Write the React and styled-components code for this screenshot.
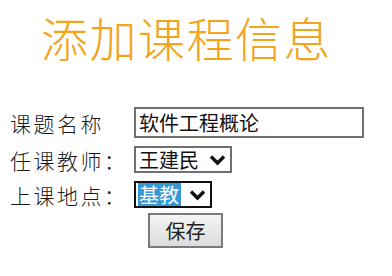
import styled, { createGlobalStyle } from "styled-components";

const Global = createGlobalStyle`
  html, body {
    margin: 0;
    padding: 0;
    background: #fff;
  }
`;

const Page = styled.div`
  width: 392px;
  height: 276px;
  padding: 0 0 0 10px;
  box-sizing: border-box;
  font-family: "Noto Sans CJK SC", sans-serif;
  color: #111;
`;

const Title = styled.h1`
  margin: 0;
  padding: 9px 0 0 31px;
  height: 95px;
  box-sizing: border-box;
  font-size: 47px;
  line-height: 56px;
  font-weight: 300;
  letter-spacing: 1.5px;
  color: #f5a31a;
`;

const Form = styled.form`
  display: grid;
  grid-template-columns: 124px 1fr;
  row-gap: 8px;
  align-items: center;
  margin-top: 12px;
`;

const Label = styled.label`
  font-size: 21px;
  font-weight: 300;
  letter-spacing: 2.5px;
  line-height: 24px;
  color: #1a1a1a;
`;

const TextInput = styled.input`
  width: 230px;
  height: 31px;
  box-sizing: border-box;
  border: 2px solid #707070;
  padding: 0 3px;
  font-family: "Noto Sans CJK SC", sans-serif;
  font-size: 20px;
  font-weight: 400;
  color: #111;
  outline: none;
`;

const Select = styled.div`
  display: inline-flex;
  align-items: center;
  justify-self: start;
  height: 27px;
  box-sizing: border-box;
  border: 2px solid ${({ $focused }) => ($focused ? "#111" : "#707070")};
  padding: 0 4px 0 2px;
  gap: 8px;
  font-size: 20px;
  font-weight: 400;
  background: #fff;
`;

const Value = styled.span`
  line-height: 23px;
  padding: 0 2px 0 1px;
  background: ${({ $selected }) => ($selected ? "#3598d4" : "transparent")};
  color: ${({ $selected }) => ($selected ? "#fff" : "#111")};
`;

const Actions = styled.div`
  grid-column: 2;
  margin-top: -3px;
  padding-left: 14px;
`;

const Button = styled.button`
  width: 75px;
  height: 35px;
  border: 2px solid #7a7a7a;
  background: linear-gradient(#f4f4f4, #dcdcdc);
  font-family: "Noto Sans CJK SC", sans-serif;
  font-size: 20px;
  font-weight: 400;
  color: #222;
  padding: 0;
`;

function Chevron() {
  return (
    <svg width="17" height="12" viewBox="0 0 17 12">
      <path d="M2 2.5 L8.5 9 L15 2.5" fill="none" stroke="#111" strokeWidth="3.4" />
    </svg>
  );
}

export default function App() {
  return (
    <Page>
      <Global />
      <Title>添加课程信息</Title>
      <Form onSubmit={(e) => e.preventDefault()}>
        <Label>课题名称</Label>
        <TextInput defaultValue="软件工程概论" />
        <Label>任课教师：</Label>
        <Select>
          <Value>王建民</Value>
          <Chevron />
        </Select>
        <Label>上课地点：</Label>
        <Select $focused>
          <Value $selected>基教</Value>
          <Chevron />
        </Select>
        <Actions>
          <Button type="submit">保存</Button>
        </Actions>
      </Form>
    </Page>
  );
}
